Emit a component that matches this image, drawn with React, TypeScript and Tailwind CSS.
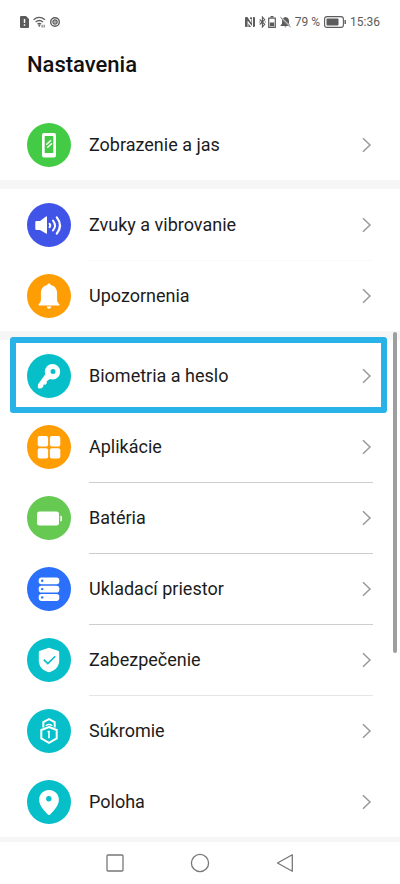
import React from "react";

interface SettingItem {
  label: string;
  color: string;
  icon: React.ReactNode;
  divider?: string;
  highlighted?: boolean;
}

const DisplayIcon = () => (
  <>
    <path
      fillRule="evenodd"
      d="M17 10h10a2 2 0 0 1 2 2v20.500a2 2 0 0 1-2 2H17a2 2 0 0 1-2-2V12a2 2 0 0 1 2-2zM17.700 13v17h8.600V13z"
    />
    <path d="M19.200 21.800l4.800-4.600M20.200 24.800l4.800-4.600" stroke="#fff" strokeWidth="1.500" />
  </>
);

const SoundIcon = () => (
  <>
    <path d="M9.500 18H13l6-4.600q1-.6 1 .6v16q0 1.200-1 .6L13 27H9.500q-1.200 0-1.200-1.200v-6.600Q8.300 18 9.500 18z" />
    <g fill="none" stroke="#fff" strokeLinecap="round">
      <path d="M22.600 20.800q1.400 1.700 0 3.400" strokeWidth="2" />
      <path d="M26 17.600q4 4.900 0 9.800" strokeWidth="2" />
      <path d="M29.800 14.400q6.400 8.100 0 16.200" strokeWidth="2.200" />
    </g>
  </>
);

const BellIcon = () => (
  <>
    <path d="M22 9.500c.9 0 1.600.6 1.800 1.400 3.900.9 6.300 4 6.300 8v6.600c0 2 .6 3.300 2 4.600.8.800.4 1.500-.5 1.500H12.400c-.9 0-1.300-.7-.5-1.500 1.400-1.300 2-2.600 2-4.600v-6.600c0-4 2.400-7.100 6.300-8 .2-.8.900-1.400 1.800-1.400z" />
    <path d="M19.600 32.600h4.800q-.6 2.200-2.400 2.200t-2.400-2.200z" />
  </>
);

const KeyIcon = () => (
  <>
    <path
      fillRule="evenodd"
      d="M25.500 10a7.700 7.700 0 1 1 0 15.400 7.700 7.700 0 0 1 0-15.400zm.5 5a2.500 2.500 0 1 0 0 5 2.500 2.500 0 0 0 0-5z"
    />
    <path d="M18.300 20.300l4.600 4.600-3.400 2.700.5 1.400-1.700 1.700-1.700-.2-.4 2-1.400 1.700-3.300.2-.6-.6v-3.200z" />
  </>
);

const AppsIcon = () => (
  <>
    <rect x="10.700" y="11" width="10.400" height="10.400" rx="2" />
    <rect x="22.900" y="11" width="10.400" height="10.400" rx="2" />
    <rect x="10.700" y="23.200" width="10.400" height="10.400" rx="2" />
    <rect x="22.900" y="23.200" width="10.400" height="10.400" rx="2" />
  </>
);

const BatteryIcon = () => (
  <>
    <rect x="10" y="15.500" width="22" height="14" rx="2.500" />
    <path d="M33.300 19.500q1.700 0 1.700 1.500v3q0 1.500-1.700 1.500z" />
  </>
);

const StorageIcon = () => (
  <>
    <rect x="11.700" y="10.400" width="20.600" height="6.900" rx="2.800" />
    <rect x="11.700" y="18.700" width="20.600" height="6.900" rx="2.800" />
    <rect x="11.700" y="27" width="20.600" height="6.900" rx="2.800" />
    <g fill="#2a70fa">
      <circle cx="15.200" cy="13.800" r="1.200" />
      <circle cx="15.200" cy="22.100" r="1.200" />
      <circle cx="15.200" cy="30.400" r="1.200" />
    </g>
  </>
);

const ShieldIcon = () => (
  <>
    <path d="M22 9.800l9 3q1.200.4 1.200 1.600v8.400c0 5.400-3.600 9.700-9.300 11.300q-.9.300-1.800 0c-5.700-1.600-9.300-5.900-9.300-11.300v-8.400q0-1.200 1.200-1.600z" />
    <path d="M16.800 21.600l4 4 7.400-7.400" fill="none" stroke="#06bfc9" strokeWidth="1.600" />
  </>
);

const PrivacyIcon = () => (
  <g fill="none" stroke="#fff" strokeWidth="2">
    <path d="M16.300 18.500v-5.300L22 10.200l5.700 3v5.300" />
    <path d="M18.800 16.800q3.200-2.600 6.400 0" strokeWidth="1.400" />
    <path d="M22 18l7.700 3v8.400L22 33.800l-7.700-4.400V21z" />
    <path d="M22 21.800v7.400M20.600 22.600H22" strokeWidth="1.600" />
  </g>
);

const LocationIcon = () => (
  <path
    fillRule="evenodd"
    d="M22 10c5.600 0 9.900 4.300 9.900 9.800 0 6-5.300 11-8.700 14.600q-1.200 1.200-2.400 0c-3.400-3.600-8.700-8.600-8.700-14.600 0-5.500 4.300-9.800 9.900-9.800zm-.2 6a2.700 2.700 0 1 0 0 5.400 2.700 2.700 0 0 0 0-5.400z"
  />
);

const sections: SettingItem[][] = [
  [{ label: "Zobrazenie a jas", color: "bg-[#43cb45]", icon: <DisplayIcon /> }],
  [
    { label: "Zvuky a vibrovanie", color: "bg-[#4154e8]", icon: <SoundIcon /> },
    { label: "Upozornenia", color: "bg-[#ff9d05]", icon: <BellIcon />, divider: "border-[#fafafa]" },
  ],
  [
    { label: "Biometria a heslo", color: "bg-[#06bfc9]", icon: <KeyIcon />, highlighted: true },
    { label: "Aplikácie", color: "bg-[#ff9d05]", icon: <AppsIcon /> },
    { label: "Batéria", color: "bg-[#65c952]", icon: <BatteryIcon />, divider: "border-[#cdcdcd]" },
    { label: "Ukladací priestor", color: "bg-[#2a70fa]", icon: <StorageIcon />, divider: "border-[#cdcdcd]" },
    { label: "Zabezpečenie", color: "bg-[#06bfc9]", icon: <ShieldIcon />, divider: "border-[#cdcdcd]" },
    { label: "Súkromie", color: "bg-[#06bfc9]", icon: <PrivacyIcon />, divider: "border-[#e6e6e6]" },
    { label: "Poloha", color: "bg-[#06bfc9]", icon: <LocationIcon /> },
  ],
];

const StatusBar = () => (
  <div className="flex h-11 items-center justify-between px-5 text-xs text-[#5c5c5c]">
    <div className="flex items-center gap-1">
      <svg className="h-3 w-[9px]" viewBox="0 0 9 12" fill="currentColor">
        <path fillRule="evenodd" d="M1 0h5l3 3v8q0 1-1 1H1q-1 0-1-1V1q0-1 1-1zm2.800 3v4h1.400V3zm0 5.200v1.500h1.400V8.200z" />
      </svg>
      <svg className="h-3 w-[13px]" viewBox="0 0 14 12" fill="none" stroke="currentColor" strokeWidth="1.400">
        <path d="M.6 3.600q6-5 12.400 0M2.800 6q4-3.200 8 0M4.800 8.200q2-1.500 4 0" />
        <path d="M6 9l.8 2 .8-2zM9.800 9v3M12 9v3" strokeWidth="1" />
      </svg>
      <svg className="h-[10px] w-[10px]" viewBox="0 0 10 10" fill="none" stroke="currentColor">
        <circle cx="5" cy="5" r="4.300" strokeWidth="1.400" />
        <circle cx="5" cy="5" r="2.100" strokeWidth="1.200" />
        <path d="M5 3v4M3 5h4" strokeWidth=".6" />
      </svg>
    </div>
    <div className="flex items-center gap-1">
      <svg className="h-[10px] w-[10px]" viewBox="0 0 10 10" fill="currentColor">
        <path d="M0 1q0-1 1-1h1.400l4 6V2H5V.6L7 .2V9L2.600 3.400V10H1Q0 10 0 9zM8 0h1q1 0 1 1v8q0 1-1 1H8zM3.400 6.500L6 10H3.400z" />
      </svg>
      <div className="flex items-center gap-[2px]">
        <svg className="h-3 w-[7px]" viewBox="0 0 7 12" fill="none" stroke="currentColor" strokeWidth="1.100">
          <path d="M.7 3.500l5 4.800L3.400 11V1l2.300 2.700-5 4.800" />
          <path d="M.2 6h1M5.800 6h1" />
        </svg>
        <svg className="h-3 w-[8px]" viewBox="0 0 8 12" fill="none" stroke="currentColor" strokeWidth="1.200">
          <path d="M2.500 .6h3M.7 2.200h6.600v9.100H.7z" />
          <path d="M2.400 7h3.200v2.600H2.400z" fill="currentColor" />
        </svg>
      </div>
      <svg className="h-3 w-[11px]" viewBox="0 0 11 12" fill="currentColor">
        <path d="M2 3.600L8.600 10H.4q0-1 1.600-2.200zM3 2.600Q3.800 1.300 5.500 1q3.400.5 3.500 4v2.800q1.400 1 1.400 1.600zM4.300 10.500h2.400l-1.200 1z" />
        <path d="M.5 1.200l10 9.800" stroke="currentColor" strokeWidth="1" />
      </svg>
      <span>79 %</span>
      <svg className="h-3 w-[22px]" viewBox="0 0 22 12" fill="none" stroke="currentColor">
        <rect x=".6" y=".6" width="18.800" height="10.800" rx="2.500" strokeWidth="1.100" />
        <rect x="2.500" y="2.500" width="12" height="7" rx="1" fill="currentColor" stroke="none" />
        <path d="M21.200 4v4" strokeWidth="1.400" />
      </svg>
      <span>15:36</span>
    </div>
  </div>
);

const SettingRow: React.FC<{ item: SettingItem }> = ({ item }) => (
  <li className="relative">
    <button type="button" className="flex h-[71px] w-full items-center gap-[18px] px-[27px] text-left">
      <span className={`size-11 shrink-0 rounded-full ${item.color}`}>
        <svg className="size-11" viewBox="0 0 44 44" fill="#fff">
          {item.icon}
        </svg>
      </span>
      <span
        className={`flex h-full flex-1 items-center justify-between border-t ${
          item.divider ?? "border-transparent"
        }`}
      >
        <span className="text-lg text-[#1c1c1c]">{item.label}</span>
        <svg className="h-4 w-[11px]" viewBox="0 0 11 16" fill="none" stroke="#999" strokeWidth="1.500">
          <path d="M1 1.200L8 8l-7 6.800" />
        </svg>
      </span>
    </button>
    {item.highlighted && (
      <div className="pointer-events-none absolute -top-[3px] right-[13px] -bottom-[2px] left-[10px] rounded-[3px] border-6 border-[#29b2e8]" />
    )}
  </li>
);

const NavBar = () => (
  <nav className="flex h-[42px] justify-center text-[#777]">
    <button type="button" aria-label="Posledné" className="flex w-[85px] items-center justify-center">
      <svg className="size-5" viewBox="0 0 20 20" fill="none" stroke="currentColor" strokeWidth="1.300">
        <rect x="2" y="2" width="16" height="16" rx="1" />
      </svg>
    </button>
    <button type="button" aria-label="Domov" className="flex w-[85px] items-center justify-center">
      <svg className="size-5" viewBox="0 0 20 20" fill="none" stroke="currentColor" strokeWidth="1.300">
        <circle cx="10" cy="10" r="8.600" />
      </svg>
    </button>
    <button type="button" aria-label="Späť" className="flex w-[85px] items-center justify-center">
      <svg className="size-5" viewBox="0 0 20 20" fill="none" stroke="currentColor" strokeWidth="1.300" strokeLinejoin="round">
        <path d="M2.500 10L17.300 1.700v16.600z" />
      </svg>
    </button>
  </nav>
);

const App: React.FC = () => {
  return (
    <div className="min-h-screen bg-white font-['Roboto',sans-serif]">
      <StatusBar />
      <header className="h-[65px] px-[27px]">
        <h1 className="text-[22px] leading-[42px] font-medium text-[#111]">Nastavenia</h1>
      </header>

      <main className="relative border-b-5 border-[#f6f6f6]">
        {sections.map((items, i) => (
          <ul key={i} className={i > 0 ? "border-t-9 border-[#f6f6f6]" : ""}>
            {items.map((item) => (
              <SettingRow key={item.label} item={item} />
            ))}
          </ul>
        ))}
        {/* Scroll indicator */}
        <div className="absolute top-[223px] right-[3px] h-[321px] w-1 rounded-full bg-[#9e9e9e]" />
      </main>

      <NavBar />
    </div>
  );
};

export default App;
